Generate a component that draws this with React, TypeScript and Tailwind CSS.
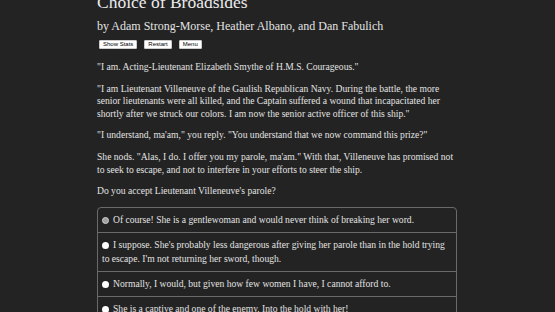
import React from "react";

const serif = { fontFamily: '"Liberation Serif", "DejaVu Serif", serif' } as React.CSSProperties;

function Radio({ selected }: { selected?: boolean }) {
  return selected ? (
    <span className="inline-block align-[-1px] w-[7px] h-[7px] rounded-full bg-[#a0a0a0] border border-[#d0d0d0] mr-[4px]" />
  ) : (
    <span className="inline-block align-[-1px] w-[7px] h-[7px] rounded-full bg-white mr-[4px]" />
  );
}

const options = [
  { text: "Of course! She is a gentlewoman and would never think of breaking her word.", selected: true },
  { text: "I suppose. She's probably less dangerous after giving her parole than in the hold trying to escape. I'm not returning her sword, though." },
  { text: "Normally, I would, but given how few women I have, I cannot afford to." },
  { text: "She is a captive and one of the enemy. Into the hold with her!" },
];

export default function App() {
  return (
    <div className="w-[555px] h-[312px] overflow-hidden bg-[#232323] text-[#e2e2e2]" style={serif}>
      <div className="ml-[97px] w-[362px]">
        <h1 className="text-[17.5px] leading-[20px] -mt-[8px] text-[#ececec]">Choice of Broadsides</h1>
        <div className="text-[12px] leading-[14px] mt-[7px]">by Adam Strong-Morse, Heather Albano, and Dan Fabulich</div>
        <div className="flex gap-[7px] mt-[7px] ml-[2px]" style={{ fontFamily: '"Liberation Sans", Arial, sans-serif' }}>
          <button className="h-[9px] px-[3px] bg-white text-black text-[6px] leading-[7px] rounded-[1px] border border-[#ccc]">Show Stats</button>
          <button className="h-[9px] px-[3px] bg-white text-black text-[6px] leading-[7px] rounded-[1px] border border-[#ccc]">Restart</button>
          <button className="h-[9px] px-[3px] bg-white text-black text-[6px] leading-[7px] rounded-[1px] border border-[#ccc]">Menu</button>
        </div>
        <div className="text-[9.6px] leading-[12.6px] mt-[12px] flex flex-col gap-[9px]">
          <p>"I am. Acting-Lieutenant Elizabeth Smythe of H.M.S. Courageous."</p>
          <p>"I am Lieutenant Villeneuve of the Gaulish Republican Navy. During the battle, the more senior lieutenants were all killed, and the Captain suffered a wound that incapacitated her shortly after we struck our colors. I am now the senior active officer of this ship."</p>
          <p>"I understand, ma'am," you reply. "You understand that we now command this prize?"</p>
          <p>She nods. "Alas, I do. I offer you my parole, ma'am." With that, Villeneuve has promised not to seek to escape, and not to interfere in your efforts to steer the ship.</p>
          <p>Do you accept Lieutenant Villeneuve's parole?</p>
        </div>
        <div className="mt-[9px] border border-[#6a6a6a] rounded-[4px] w-[360px]">
          {options.map((o, i) => (
            <div
              key={i}
              className={`text-[9.6px] leading-[14px] px-[4px] py-[5px] ${i > 0 ? "border-t border-[#6a6a6a]" : ""}`}
            >
              <Radio selected={o.selected} />
              {o.text}
            </div>
          ))}
        </div>
      </div>
    </div>
  );
}
